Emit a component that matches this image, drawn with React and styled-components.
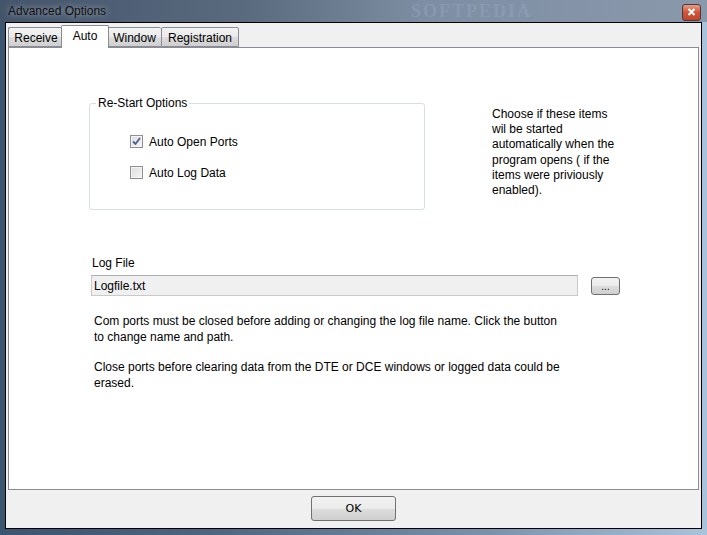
import React, { useState } from 'react';
import styled, { createGlobalStyle } from 'styled-components';

const GlobalStyle = createGlobalStyle`
  html, body {
    margin: 0;
    padding: 0;
    background: #6d7f92;
  }
  body {
    font-family: "Liberation Sans", Arial, sans-serif;
    font-size: 12px;
    color: #000;
  }
`;

const Frame = styled.div`
  width: 707px;
  height: 535px;
  box-sizing: border-box;
  display: flex;
  flex-direction: column;
  padding: 0 5px 6px 5px;
  background: linear-gradient(90deg, #3b5470 0%, #4d6580 30%, #7c93ad 70%, #a9c3dc 100%);
  overflow: hidden;
`;

const TitleBar = styled.div`
  height: 22px;
  display: flex;
  align-items: center;
  background: linear-gradient(90deg, #44546a 0%, #5a6b80 35%, #7d8ea3 60%, #8a98ab 100%);
  margin: 0 -5px;
  padding: 0 6px 0 8px;
`;

const Title = styled.span`
  font-family: "Liberation Sans", Arial, sans-serif;
  font-size: 12px;
  color: #111;
  text-shadow: 0 0 6px rgba(255, 255, 255, 0.6);
`;

const Watermark = styled.span`
  margin-left: auto;
  margin-right: 150px;
  font-family: "Liberation Serif", serif;
  font-size: 18px;
  letter-spacing: 2px;
  color: rgba(160, 182, 210, 0.3);
  font-weight: bold;
`;

const CloseButton = styled.div`
  width: 17px;
  height: 15px;
  border-radius: 3px;
  border: 1px solid #4b3a3a;
  background: linear-gradient(180deg, #e89c84 0%, #d0543a 50%, #c14428 100%);
  display: flex;
  align-items: center;
  justify-content: center;
  margin-top: 2px;
`;

const Client = styled.div`
  flex: 1;
  display: flex;
  flex-direction: column;
  background: #f0f0f0;
  border: 1px solid #000;
`;

const TabStrip = styled.div`
  display: flex;
  align-items: flex-end;
  height: 24px;
  padding-left: 2px;
`;

const Tab = styled.div`
  width: ${p => p.$w}px;
  height: ${p => (p.$active ? '23px' : '20px')};
  box-sizing: border-box;
  margin: ${p => (p.$active ? '0 -2px -1px' : '0')};
  display: flex;
  justify-content: center;
  align-items: ${p => (p.$active ? 'flex-start' : 'center')};
  padding-top: ${p => (p.$active ? '3px' : '1px')};
  font-size: 12px;
  border: 1px solid #898c95;
  border-bottom: ${p => (p.$active ? 'none' : '1px solid #898c95')};
  border-right: ${p => (p.$active ? '1px solid #898c95' : 'none')};
  background: ${p => (p.$active ? '#fff' : 'linear-gradient(180deg, #f2f2f2 0%, #ebebeb 50%, #dddddd 51%, #cfcfcf 100%)')};
  border-radius: 2px 2px 0 0;
  position: relative;
  z-index: ${p => (p.$active ? 2 : 1)};
  cursor: default;
  &:last-child {
    border-right: 1px solid #898c95;
  }
`;

const Panel = styled.div`
  flex: 1;
  margin: 0 2px;
  background: #fff;
  border: 1px solid #898c95;
  display: flex;
  flex-direction: column;
  padding: 48px 0 0 80px;
`;

const TopRow = styled.div`
  display: flex;
  align-items: flex-start;
`;

const GroupBox = styled.fieldset`
  width: 336px;
  height: 114px;
  box-sizing: border-box;
  margin: 0;
  padding: 0 0 0 6px;
  border: 1px solid #d5dfe5;
  border-radius: 3px;
`;

const Legend = styled.legend`
  padding: 0 2px;
  font-size: 12px;
  color: #000;
`;

const CheckList = styled.div`
  display: flex;
  flex-direction: column;
  gap: 16px;
  padding: 24px 0 0 34px;
`;

const CheckRow = styled.label`
  display: flex;
  align-items: center;
  gap: 6px;
  font-size: 12px;
  height: 15px;
`;

const Box = styled.span`
  width: 11px;
  height: 11px;
  border: 1px solid #8f8f8f;
  background: linear-gradient(135deg, #dcdcdc 0%, #f6f6f6 100%);
  box-shadow: inset 0 0 0 1px #f4f4f4;
  display: flex;
  align-items: center;
  justify-content: center;
`;

const Note = styled.p`
  margin: 11px 0 0 67px;
  width: 128px;
  font-size: 12px;
  line-height: 15.2px;
`;

const LogSection = styled.div`
  display: flex;
  flex-direction: column;
  margin-top: 46px;
  margin-left: 2px;
`;

const FieldLabel = styled.div`
  font-size: 12px;
  margin-bottom: 5px;
  margin-left: 1px;
`;

const FieldRow = styled.div`
  display: flex;
  align-items: center;
  gap: 13px;
`;

const TextField = styled.div`
  width: 487px;
  height: 21px;
  box-sizing: border-box;
  border: 1px solid #c9c9c9;
  border-top-color: #abadb3;
  background: #f0f0f0;
  padding: 3px 2px;
  font-size: 12px;
`;

const SmallButton = styled.button`
  width: 29px;
  height: 18px;
  padding: 0 0 2px;
  border: 1px solid #707070;
  border-radius: 3px;
  background: linear-gradient(180deg, #f2f2f2 0%, #ebebeb 50%, #dddddd 51%, #cfcfcf 100%);
  font-family: "Liberation Sans", Arial, sans-serif;
  font-size: 10px;
  line-height: 10px;
  display: flex;
  align-items: flex-end;
  justify-content: center;
  margin-top: 1px;
`;

const Paragraph = styled.p`
  margin: ${p => p.$gap || '0'} 0 0 3px;
  width: 472px;
  font-size: 12px;
  line-height: 15.5px;
`;

const Footer = styled.div`
  height: 38px;
  display: flex;
  align-items: center;
  justify-content: center;
`;

const OkButton = styled.button`
  width: 85px;
  height: 25px;
  border: 1px solid #707070;
  border-radius: 3px;
  background: linear-gradient(180deg, #f2f2f2 0%, #ebebeb 50%, #dddddd 51%, #cfcfcf 100%);
  font-family: "DejaVu Sans", Tahoma, sans-serif;
  font-size: 11px;
  color: #000;
  margin-top: -1px;
`;

const Check = ({ checked }) => (
  <Box>
    {checked && (
      <svg width="9" height="9" viewBox="0 0 9 9">
        <path d="M1 4.5 L3.5 7 L8 1" fill="none" stroke="#4a5f97" strokeWidth="1.8" />
      </svg>
    )}
  </Box>
);

const tabs = [
  { name: 'Receive', w: 55 },
  { name: 'Auto', w: 48 },
  { name: 'Window', w: 54 },
  { name: 'Registration', w: 78 },
];

export default function App() {
  const [active, setActive] = useState('Auto');
  const [openPorts, setOpenPorts] = useState(true);
  const [logData, setLogData] = useState(false);

  return (
    <>
      <GlobalStyle />
      <Frame>
        <TitleBar>
          <Title>Advanced Options</Title>
          <Watermark>SOFTPEDIA</Watermark>
          <CloseButton>
            <svg width="9" height="8" viewBox="0 0 9 8">
              <path d="M1.5 1 L7.5 7 M7.5 1 L1.5 7" stroke="#fff" strokeWidth="2" />
            </svg>
          </CloseButton>
        </TitleBar>
        <Client>
          <TabStrip>
            {tabs.map(t => (
              <Tab key={t.name} $w={t.w} $active={t.name === active} onClick={() => setActive(t.name)}>
                {t.name}
              </Tab>
            ))}
          </TabStrip>
          <Panel>
            <TopRow>
              <GroupBox>
                <Legend>Re-Start Options</Legend>
                <CheckList>
                  <CheckRow onClick={() => setOpenPorts(!openPorts)}>
                    <Check checked={openPorts} />
                    Auto Open Ports
                  </CheckRow>
                  <CheckRow onClick={() => setLogData(!logData)}>
                    <Check checked={logData} />
                    Auto Log Data
                  </CheckRow>
                </CheckList>
              </GroupBox>
              <Note>
                Choose if these items wil be started automatically when the program opens ( if the items were priviously enabled).
              </Note>
            </TopRow>
            <LogSection>
              <FieldLabel>Log File</FieldLabel>
              <FieldRow>
                <TextField>Logfile.txt</TextField>
                <SmallButton>...</SmallButton>
              </FieldRow>
              <Paragraph $gap="18px">
                Com ports must be closed before adding or changing the log file name. Click the button to change name and path.
              </Paragraph>
              <Paragraph $gap="15px">
                Close ports before clearing data from the DTE or DCE windows or logged data could be erased.
              </Paragraph>
            </LogSection>
          </Panel>
          <Footer>
            <OkButton>OK</OkButton>
          </Footer>
        </Client>
      </Frame>
    </>
  );
}
